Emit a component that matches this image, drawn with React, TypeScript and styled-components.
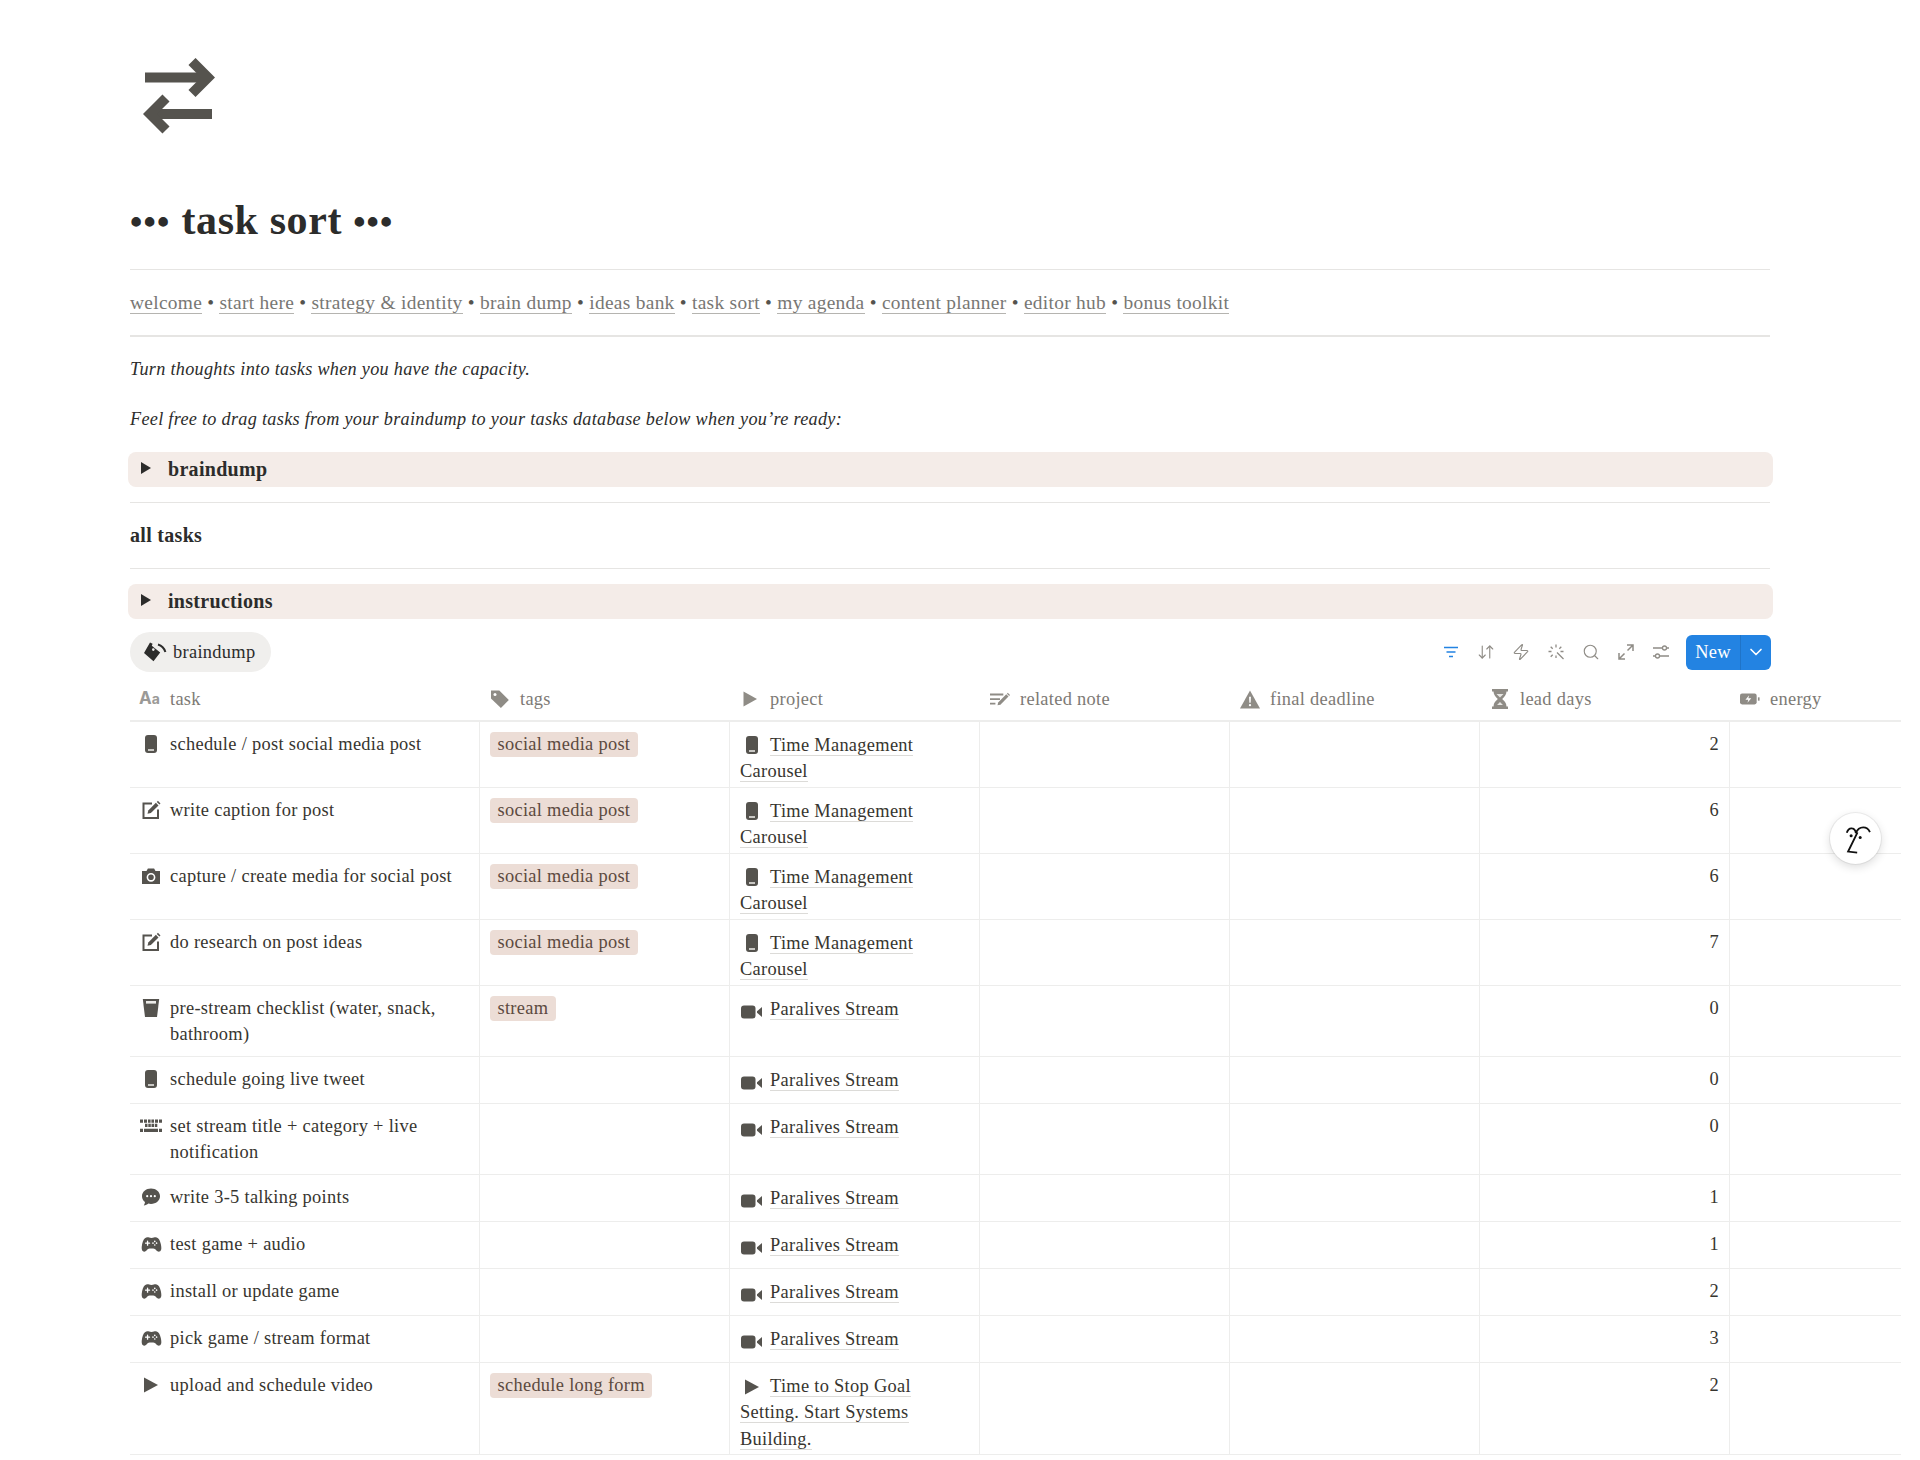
import React from "react"
import styled, { createGlobalStyle } from "styled-components"
import { ArrowDownUp, ChevronDown, Search, Zap } from "lucide-react"
import { IoGameController } from "react-icons/io5"

const GlobalStyle = createGlobalStyle`
  html, body {
    margin: 0;
    padding: 0;
    background: #fff;
  }
  body {
    font-family: "Liberation Serif", "Times New Roman", serif;
    color: #2c2c2b;
  }
  * {
    box-sizing: border-box;
  }
`

const INK = "#55534e"
const FAINT = "#8f8c86"

type IconName = "phone" | "edit" | "camera" | "cup" | "keyboard" | "chat" | "game" | "play" | "video"

const Phone = () => (
  <svg width="18" height="20" viewBox="0 0 18 20">
    <rect x="3" y="1" width="12" height="18" rx="3" fill={INK} />
    <rect x="6" y="15.2" width="6" height="1.6" fill="#e6e5e2" />
  </svg>
)

const Edit = () => (
  <svg width="20" height="20" viewBox="0 0 20 20">
    <path d="M11 3.5H2.5v14.5H17V9.5" fill="none" stroke={INK} strokeWidth="2" />
    <path d="M6.5 13.8l.8-3.4 7.6-7.6 2.6 2.6-7.6 7.6z" fill={INK} />
    <path d="M15.8 1.9l1.1-1.1 2.6 2.6-1.1 1.1z" fill={INK} />
  </svg>
)

const Camera = () => (
  <svg width="20" height="18" viewBox="0 0 20 18">
    <path d="M1 4h4.5l1.4-2.6h6.2L14.5 4H19v13H1z" fill={INK} />
    <circle cx="10" cy="10.3" r="3.6" fill="none" stroke="#fff" strokeWidth="1.6" />
  </svg>
)

const Cup = () => (
  <svg width="18" height="20" viewBox="0 0 18 20">
    <path d="M.8 1h16.4l-2.2 18H3z" fill={INK} />
    <rect x="4" y="3" width="10" height="2.6" fill="#ecebe8" />
  </svg>
)

const Keyboard = () => (
  <svg width="22" height="14" viewBox="0 0 22 14">
    <g fill={INK}>
      <path d="M0 0.500h3v3.200H0zM4 0.500h3v3.200H4zM8 0.500h2.600v3.200H8zM11.400 0.500H14v3.200h-2.600zM15 0.500h3v3.200h-3zM19 0.500h3v3.200h-3z" />
      <path d="M5 4.800h2.500v3.200H5zM8.300 4.800h2.500v3.200H8.300zM11.500 4.800H14v3.200h-2.500zM14.800 4.800h2.500v3.200h-2.500z" />
      <path d="M0 9.800h3v3.200H0zM4 9.800h14v3.200H4zM19 9.800h3v3.200h-3z" />
    </g>
  </svg>
)

const Chat = () => (
  <svg width="20" height="20" viewBox="0 0 20 20">
    <path d="M10 1.500c5 0 9 3.300 9 7.700s-4 7.700-9 7.700c-.9 0-1.800-.1-2.600-.3-1.300 1-2.800 1.900-4.600 2 .7-1 1.100-2.200 1.200-3.500C2.200 13.700 1 11.600 1 9.200 1 4.800 5 1.500 10 1.500z" fill={INK} />
    <circle cx="6.200" cy="9.200" r="1.100" fill="#fff" />
    <circle cx="10" cy="9.200" r="1.100" fill="#fff" />
    <circle cx="13.800" cy="9.200" r="1.100" fill="#fff" />
  </svg>
)

const Play = () => (
  <svg width="16" height="18" viewBox="0 0 16 18">
    <path d="M1 1.500v15L15 9z" fill={INK} />
  </svg>
)

const Video = () => (
  <svg width="22" height="14" viewBox="0 0 22 14">
    <rect x="0" y="0.500" width="14.500" height="13" rx="3" fill={INK} />
    <path d="M16 6.200L21 2v10l-5-4.200z" fill={INK} />
  </svg>
)

const iconFor = (name: IconName) => {
  switch (name) {
    case "phone": return <Phone />
    case "edit": return <Edit />
    case "camera": return <Camera />
    case "cup": return <Cup />
    case "keyboard": return <Keyboard />
    case "chat": return <Chat />
    case "game": return <IoGameController size={21} color={INK} />
    case "play": return <Play />
    case "video": return <Video />
  }
}

const TasksIcon = () => (
  <svg width="72" height="76" viewBox="0 0 72 76">
    <path d="M2 19.500h63" fill="none" stroke={INK} strokeWidth="10" />
    <path d="M49 3.500l16 16-16 16" fill="none" stroke={INK} strokeWidth="10" />
    <path d="M69 56H7" fill="none" stroke={INK} strokeWidth="10" />
    <path d="M23 40L7 56l16 16" fill="none" stroke={INK} strokeWidth="10" />
  </svg>
)

const Bucket = () => (
  <svg width="24" height="22" viewBox="0 0 24 22">
    <path d="M7 1.500l2.600 1.200-.8 2 8.400 6.800-6.700 8.800L1 12z" fill="#2c2c2b" />
    <circle cx="10.300" cy="8.600" r="1.300" fill="#f0efed" />
    <path d="M15 3.500c3.500 1 6.200 3.500 7.400 7.500" fill="none" stroke="#2c2c2b" strokeWidth="2" />
  </svg>
)

const Tag = () => (
  <svg width="20" height="20" viewBox="0 0 20 20">
    <path d="M1 1.500h8.300L18.800 11l-7.900 7.900L1 9.500z" fill={FAINT} />
    <circle cx="5" cy="5.500" r="1.500" fill="#fff" />
  </svg>
)

const NoteLines = () => (
  <svg width="24" height="18" viewBox="0 0 24 18">
    <path d="M0 2.500h16v2.200H0zM0 8h12v2.200H0zM0 13.500h6.500v2.200H0z" fill={FAINT} />
    <path d="M9 16.500l.8-3.400L19.500 3.400l2.700 2.700-9.700 9.700z" fill={FAINT} />
    <path d="M20.300 2.600l1-1 2.700 2.700-1 1z" fill={FAINT} />
  </svg>
)

const Warning = () => (
  <svg width="21" height="19" viewBox="0 0 21 19">
    <path d="M10.500 0L21 19H0z" fill={FAINT} />
    <path d="M9.500 6.500h2l-.3 6.500H9.800z" fill="#fff" />
    <circle cx="10.500" cy="15.500" r="1.200" fill="#fff" />
  </svg>
)

const Hourglass = () => (
  <svg width="16" height="20" viewBox="0 0 16 20">
    <path d="M0 0h16v2.600h-1.500c0 3.500-2.400 5.500-4.300 7.400 1.900 1.900 4.300 3.900 4.300 7.400H16V20H0v-2.600h1.500c0-3.500 2.400-5.500 4.300-7.400C3.900 8.100 1.500 6.100 1.500 2.600H0z" fill={FAINT} />
    <path d="M4.500 5h7l-3.500 3.500z M5 16l3-3 3 3z" fill="#e7e6e3" />
  </svg>
)

const Battery = () => (
  <svg width="24" height="14" viewBox="0 0 24 14">
    <rect x="0" y="0.500" width="20" height="13" rx="2.500" fill={FAINT} />
    <rect x="21.500" y="5" width="2" height="4" fill={FAINT} />
    <path d="M11 2.500L6.500 8H10l-1 3.500L13.500 6H10z" fill="#fff" />
  </svg>
)

const PlainPlay = () => (
  <svg width="16" height="18" viewBox="0 0 16 18">
    <path d="M1.500 1.500v15L15 9z" fill={FAINT} />
  </svg>
)

const FilterLines = () => (
  <svg width="18" height="18" viewBox="0 0 18 18">
    <path d="M2 4.500h14M4.500 9h9M7 13.500h4" stroke="#2383e2" strokeWidth="1.600" fill="none" />
  </svg>
)

const Wand = () => (
  <svg width="18" height="18" viewBox="0 0 18 18">
    <path
      d="M9 1.500v3M9 12.500v2.500M1.500 8.500h3M13.500 8.500h3M3.700 3.700l2 2M14.300 3.700l-2 2M3.700 13.700l2-2M10 9.500l6.500 6.500"
      stroke={FAINT}
      strokeWidth="1.300"
      fill="none"
    />
  </svg>
)

const Expand = () => (
  <svg width="18" height="18" viewBox="0 0 18 18">
    <path
      d="M10 2h6v6M16 2l-5.500 5.500M8 16H2v-6M2 16l5.500-5.500"
      stroke={FAINT}
      strokeWidth="1.500"
      fill="none"
    />
  </svg>
)

const Sliders = () => (
  <svg width="18" height="18" viewBox="0 0 18 18">
    <path d="M1 5h9.500M14.500 5H17M1 13h2.500M7.500 13H17" stroke={FAINT} strokeWidth="1.300" fill="none" />
    <circle cx="12.500" cy="5" r="2" fill="none" stroke={FAINT} strokeWidth="1.300" />
    <circle cx="5.500" cy="13" r="2" fill="none" stroke={FAINT} strokeWidth="1.300" />
  </svg>
)

const AssistantFace = () => (
  <svg width="51" height="51" viewBox="15 15 152 152">
    <path d="M65 74c3-9 10-14 16-13 7 1 10 6 11 14 4-10 12-17 22-17 9 0 16 5 20 14" fill="none" stroke="#111" strokeWidth="5.500" />
    <path d="M97 73L69 130l27 3" fill="none" stroke="#111" strokeWidth="5.500" />
    <circle cx="78" cy="83" r="4.500" fill="#111" />
    <circle cx="105" cy="88" r="4.500" fill="#111" />
  </svg>
)

const navLinks = [
  "welcome", "start here", "strategy & identity", "brain dump", "ideas bank",
  "task sort", "my agenda", "content planner", "editor hub", "bonus toolkit",
]

interface TaskRow {
  icon: IconName
  task: string
  tag?: string
  projectIcon: IconName
  project: string
  lead: number
}

const TMC = "Time Management Carousel"
const PS = "Paralives Stream"

const tasks: TaskRow[] = [
  { icon: "phone", task: "schedule / post social media post", tag: "social media post", projectIcon: "phone", project: TMC, lead: 2 },
  { icon: "edit", task: "write caption for post", tag: "social media post", projectIcon: "phone", project: TMC, lead: 6 },
  { icon: "camera", task: "capture / create media for social post", tag: "social media post", projectIcon: "phone", project: TMC, lead: 6 },
  { icon: "edit", task: "do research on post ideas", tag: "social media post", projectIcon: "phone", project: TMC, lead: 7 },
  { icon: "cup", task: "pre-stream checklist (water, snack, bathroom)", tag: "stream", projectIcon: "video", project: PS, lead: 0 },
  { icon: "phone", task: "schedule going live tweet", projectIcon: "video", project: PS, lead: 0 },
  { icon: "keyboard", task: "set stream title + category + live notification", projectIcon: "video", project: PS, lead: 0 },
  { icon: "chat", task: "write 3-5 talking points", projectIcon: "video", project: PS, lead: 1 },
  { icon: "game", task: "test game + audio", projectIcon: "video", project: PS, lead: 1 },
  { icon: "game", task: "install or update game", projectIcon: "video", project: PS, lead: 2 },
  { icon: "game", task: "pick game / stream format", projectIcon: "video", project: PS, lead: 3 },
  { icon: "play", task: "upload and schedule video", tag: "schedule long form", projectIcon: "play", project: "Time to Stop Goal Setting. Start Systems Building.", lead: 2 },
]

export default function App() {
  return (
    <>
      <GlobalStyle />
      <Page>
        <PageIcon><TasksIcon /></PageIcon>
        <Title><Dots>•••</Dots> task sort <Dots>•••</Dots></Title>
        <Rule $top={22} />
        <Nav>
          {navLinks.map((link, i) => (
            <React.Fragment key={link}>
              {i > 0 && " • "}
              <NavLink>{link}</NavLink>
            </React.Fragment>
          ))}
        </Nav>
        <Rule $thick />
        <Lead $gap={19}>Turn thoughts into tasks when you have the capacity.</Lead>
        <Lead $gap={24}>Feel free to drag tasks from your braindump to your tasks database below when you’re ready:</Lead>
        <Callout>
          <Caret />
          braindump
        </Callout>
        <Rule $top={15} />
        <Heading>all tasks</Heading>
        <Rule />
        <Callout $top={15}>
          <Caret />
          instructions
        </Callout>
        <Toolbar>
          <ViewPill><Bucket />braindump</ViewPill>
          <Tools>
            <ToolIcon><FilterLines /></ToolIcon>
            <ToolIcon><ArrowDownUp size={18} strokeWidth={1.5} /></ToolIcon>
            <ToolIcon><Zap size={18} strokeWidth={1.5} /></ToolIcon>
            <ToolIcon><Wand /></ToolIcon>
            <ToolIcon><Search size={18} strokeWidth={1.5} /></ToolIcon>
            <ToolIcon><Expand /></ToolIcon>
            <ToolIcon><Sliders /></ToolIcon>
            <NewButton>
              <NewLabel>New</NewLabel>
              <NewCaret><ChevronDown size={20} strokeWidth={2} /></NewCaret>
            </NewButton>
          </Tools>
        </Toolbar>
        <Table>
          <HeaderRow>
            <HeaderCell $first><AaMark>A<small>a</small></AaMark>task</HeaderCell>
            <HeaderCell><HeaderIcon><Tag /></HeaderIcon>tags</HeaderCell>
            <HeaderCell><HeaderIcon><PlainPlay /></HeaderIcon>project</HeaderCell>
            <HeaderCell><HeaderIcon><NoteLines /></HeaderIcon>related note</HeaderCell>
            <HeaderCell><HeaderIcon><Warning /></HeaderIcon>final deadline</HeaderCell>
            <HeaderCell><HeaderIcon><Hourglass /></HeaderIcon>lead days</HeaderCell>
            <HeaderCell><HeaderIcon><Battery /></HeaderIcon>energy</HeaderCell>
          </HeaderRow>
          {tasks.map(row => (
            <Row key={row.task}>
              <TaskCell>
                <TaskIcon>{iconFor(row.icon)}</TaskIcon>
                <span>{row.task}</span>
              </TaskCell>
              <Cell>{row.tag && <TagChip>{row.tag}</TagChip>}</Cell>
              <ProjectCell>
                <ProjectIcon>{iconFor(row.projectIcon)}</ProjectIcon>
                <ProjectLink>{row.project}</ProjectLink>
              </ProjectCell>
              <Cell />
              <Cell />
              <NumberCell>{row.lead}</NumberCell>
              <Cell />
            </Row>
          ))}
        </Table>
        <Assistant><AssistantFace /></Assistant>
      </Page>
    </>
  )
}

const Page = styled.div`
  position: relative;
  width: 1901px;
  height: 1460px;
  overflow: hidden;
  padding: 58px 0 0 130px;
`

const PageIcon = styled.div`
  height: 76px;
  padding-left: 13px;
  svg {
    display: block;
  }
`

const Title = styled.h1`
  margin: 62px 0 0;
  font-size: 42px;
  line-height: 48px;
  font-weight: 700;
  letter-spacing: 0.6px;
  color: #2c2c2b;
`

const Dots = styled.span`
  font-size: 35px;
  letter-spacing: 1.2px;
`

const Rule = styled.div<{ $thick?: boolean; $top?: number }>`
  width: 1640px;
  height: ${p => (p.$thick ? 2 : 1)}px;
  margin-top: ${p => (p.$top ?? (p.$thick ? 19 : 20))}px;
  background: #e6e5e3;
`

const Nav = styled.div`
  margin-top: 20px;
  font-size: 19.4px;
  line-height: 26px;
  letter-spacing: 0.3px;
  color: #55534e;
  white-space: nowrap;
`

const NavLink = styled.span`
  color: #787774;
  border-bottom: 1px solid #b5b4b0;
`

const Lead = styled.p<{ $gap?: number }>`
  margin: ${p => p.$gap ?? 20}px 0 0;
  font-size: 18.2px;
  line-height: 26px;
  font-style: italic;
  letter-spacing: 0.3px;
`

const Callout = styled.div<{ $top?: number }>`
  display: flex;
  align-items: center;
  width: 1645px;
  height: 35px;
  margin: ${p => p.$top ?? 20}px 0 0 -2px;
  padding-left: 13px;
  border-radius: 8px;
  background: #f4ece8;
  font-size: 20px;
  font-weight: 700;
  letter-spacing: 0.3px;
  color: #2c2c2b;
`

const Caret = styled.span`
  width: 0;
  height: 0;
  margin-right: 17px;
  margin-top: -3px;
  border-top: 6px solid transparent;
  border-bottom: 6px solid transparent;
  border-left: 10px solid #2c2c2b;
`

const Heading = styled.div`
  margin-top: 19px;
  font-size: 20px;
  line-height: 26px;
  font-weight: 700;
  letter-spacing: 0.3px;
`

const Toolbar = styled.div`
  display: flex;
  align-items: center;
  justify-content: space-between;
  width: 1641px;
  height: 40px;
  margin-top: 13px;
`

const ViewPill = styled.div`
  display: flex;
  align-items: center;
  gap: 6px;
  height: 40px;
  padding: 0 16px 0 13px;
  border-radius: 20px;
  background: #f0efed;
  font-size: 18.4px;
  letter-spacing: 0.3px;
`

const Tools = styled.div`
  display: flex;
  align-items: center;
`

const ToolIcon = styled.span`
  display: flex;
  justify-content: center;
  width: 35px;
  color: ${FAINT};
`

const NewButton = styled.div`
  display: flex;
  height: 35px;
  width: 85px;
  margin-left: 8px;
  border-radius: 6px;
  background: #2383e2;
  color: #fff;
`

const NewLabel = styled.span`
  display: flex;
  align-items: center;
  justify-content: center;
  width: 55px;
  font-size: 18.4px;
  letter-spacing: 0.3px;
  border-right: 1px solid #1f74c8;
`

const NewCaret = styled.span`
  display: flex;
  align-items: center;
  justify-content: center;
  flex: 1;
`

const columns = "350px repeat(5, 250px) 171px"

const Table = styled.div`
  width: 1771px;
  font-size: 18.4px;
  line-height: 26.25px;
  letter-spacing: 0.3px;
  color: #37352f;
`

const HeaderRow = styled.div`
  display: grid;
  grid-template-columns: ${columns};
  height: 50px;
  border-bottom: 2px solid #ededec;
  color: #7d7a75;
`

const HeaderCell = styled.div<{ $first?: boolean }>`
  display: flex;
  align-items: center;
  height: 26px;
  margin-top: 14px;
  padding-left: ${p => (p.$first ? 9 : 10)}px;
  white-space: nowrap;
`

const HeaderIcon = styled.span`
  display: flex;
  align-items: center;
  justify-content: center;
  width: 20px;
  margin-right: 10px;
`

const AaMark = styled.span`
  width: 22px;
  margin-right: 9px;
  font-family: "Inter", "Liberation Sans", sans-serif;
  font-size: 17px;
  font-weight: 700;
  letter-spacing: 0;
  color: #9b9a97;
  small {
    font-size: 14px;
  }
`

const Row = styled.div`
  display: grid;
  grid-template-columns: ${columns};
  min-height: 47px;
  border-bottom: 1px solid #ededec;
`

const Cell = styled.div`
  padding: 9px 10px 0;
  border-right: 1px solid #ededec;
  &:last-child {
    border-right: none;
  }
`

const TaskCell = styled(Cell)`
  display: flex;
  padding: 9px 8px 8.5px 9px;
`

const TaskIcon = styled.span`
  display: flex;
  flex: none;
  align-items: center;
  justify-content: center;
  width: 24px;
  height: 26px;
  margin-right: 7px;
`

const TagChip = styled.span`
  display: inline-block;
  height: 25px;
  padding: 0 7.5px;
  border-radius: 4px;
  background: #ecddd6;
  line-height: 25px;
  color: #5c4a3f;
  white-space: nowrap;
`

const ProjectCell = styled(Cell)`
  padding: 10px 10px 2.5px;
`

const ProjectIcon = styled.span`
  display: inline-flex;
  align-items: center;
  justify-content: center;
  width: 24px;
  height: 20px;
  margin-right: 6px;
  vertical-align: -4px;
`

const ProjectLink = styled.span`
  border-bottom: 1px solid #dcdbd8;
`

const NumberCell = styled(Cell)`
  text-align: right;
`

const Assistant = styled.div`
  position: absolute;
  left: 1830px;
  top: 813px;
  width: 51px;
  height: 51px;
  border-radius: 50%;
  background: #fff;
  box-shadow: 0 0 0 1px rgba(0, 0, 0, 0.06), 0 3px 10px rgba(0, 0, 0, 0.14);
  svg {
    display: block;
  }
`
